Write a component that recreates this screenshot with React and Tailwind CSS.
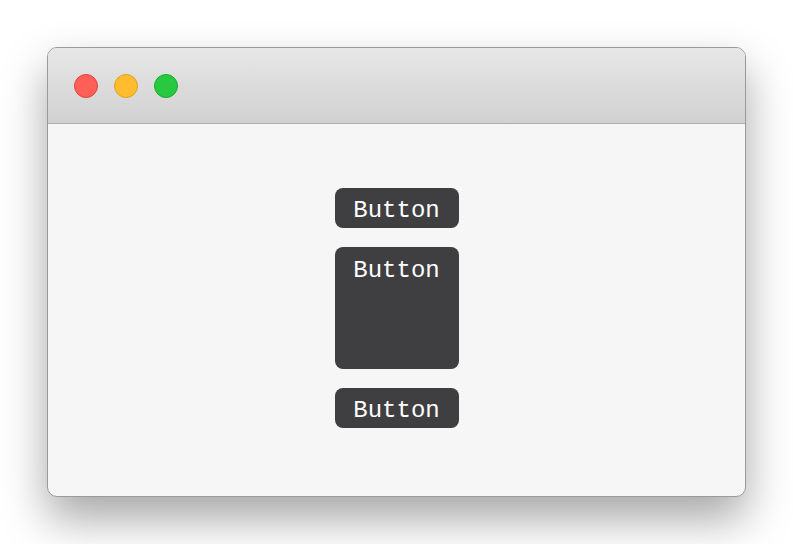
export default function App() {
  const lights = [
    "bg-[#fe5f57] border-[#e0443e]",
    "bg-[#febc2e] border-[#dea123]",
    "bg-[#28c840] border-[#1aab29]",
  ];

  return (
    <div className="w-[793px] h-[544px] bg-white flex pt-[47px] pl-[47px]">
      <div className="w-[699px] h-[450px] rounded-[10px] border border-[#9a9a9a] bg-[#f6f6f6] overflow-hidden flex flex-col shadow-[0_22px_45px_rgba(0,0,0,0.35)]">
        {/* title bar */}
        <div className="h-[76px] shrink-0 flex items-center gap-4 pl-[26px] bg-gradient-to-b from-[#e7e7e7] to-[#d1d1d1] border-b border-[#aeaeae]">
          {lights.map((c, i) => (
            <span key={i} className={`w-6 h-6 rounded-full border ${c}`} />
          ))}
        </div>

        {/* content */}
        <div className="flex-1 flex flex-col items-center justify-center gap-[19px] pb-[4px] font-['Liberation_Mono',monospace] text-[24px] text-white">
          <button className="w-[124px] h-10 rounded-lg bg-[#3f3f42] flex items-center justify-center pt-[5px]">
            Button
          </button>
          <button className="w-[124px] h-[122px] rounded-lg bg-[#3f3f42] flex items-start justify-center pt-[6px]">
            Button
          </button>
          <button className="w-[124px] h-10 rounded-lg bg-[#3f3f42] flex items-center justify-center pt-[5px]">
            Button
          </button>
        </div>
      </div>
    </div>
  );
}
